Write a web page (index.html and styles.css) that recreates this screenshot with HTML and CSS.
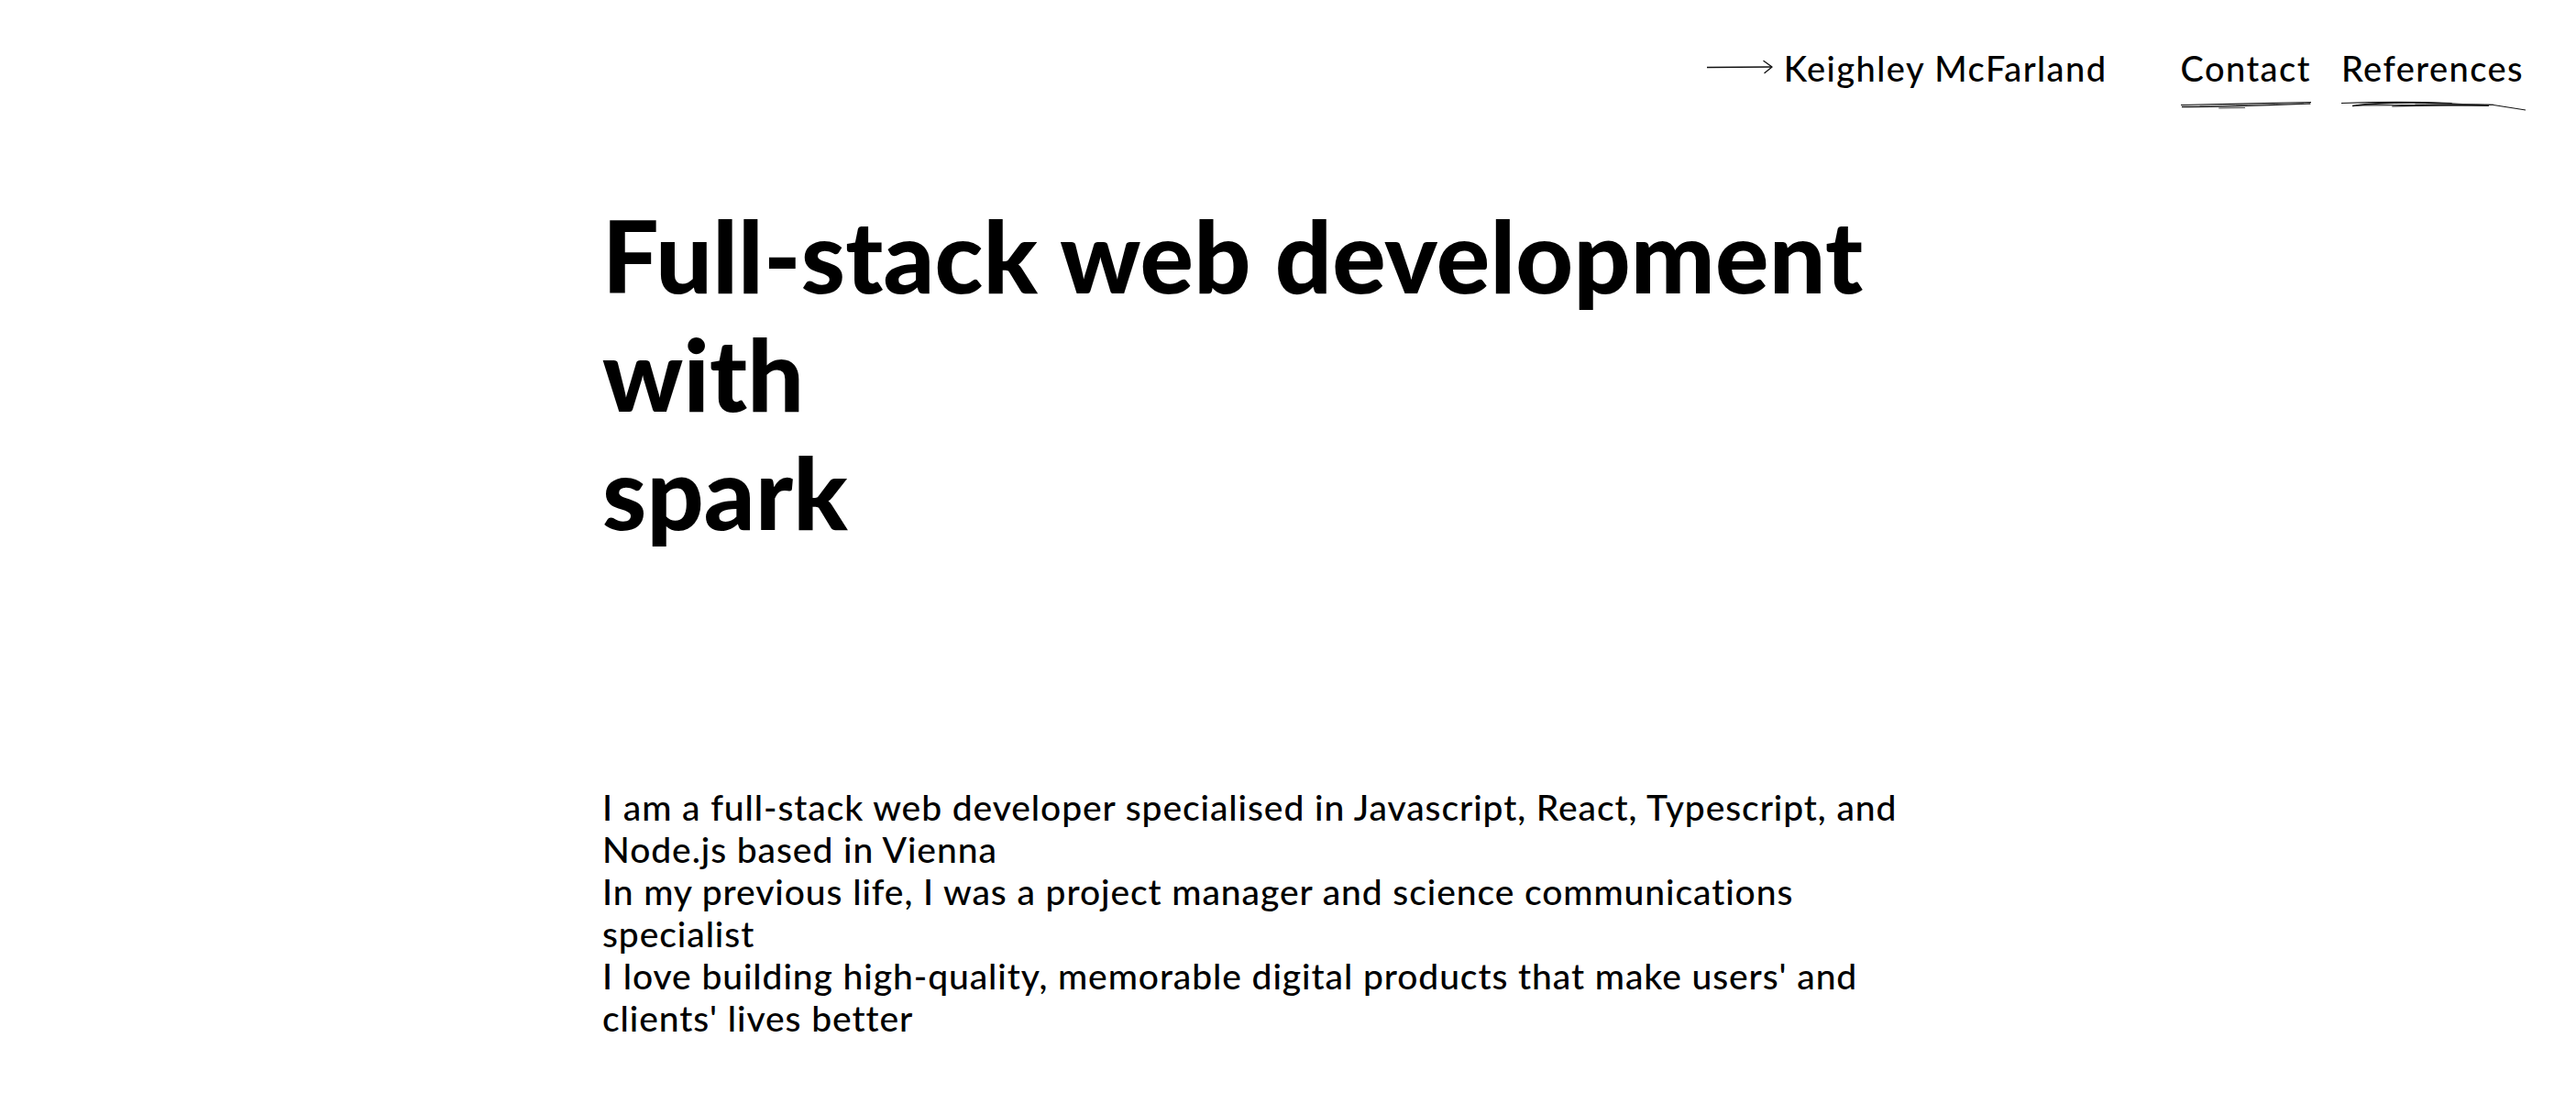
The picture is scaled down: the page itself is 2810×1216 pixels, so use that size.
FILE: index.html
```html
<!DOCTYPE html>
<html lang="en">
<head>
<meta charset="utf-8">
<title>Keighley McFarland</title>
<link rel="stylesheet" href="styles.css">
</head>
<body>
<header class="site-header">
  <a class="brand" href="#">
    <svg class="brand-arrow" width="72" height="16" viewBox="0 0 72 16" aria-hidden="true">
      <path d="M0 8.5 L70 8" fill="none" stroke="#111" stroke-width="1.4"/>
      <path d="M62 1.5 L71 8 L63 14.5" fill="none" stroke="#111" stroke-width="1.4" stroke-linecap="round" stroke-linejoin="round"/>
    </svg>
    <span class="brand-name">Keighley McFarland</span>
  </a>
  <nav class="nav">
    <a class="nav-link" href="#">Contact
      <svg class="scribble" width="138" height="10" viewBox="0 0 138 10" preserveAspectRatio="none" aria-hidden="true">
        <path d="M0 4.5 C40 3.5 95 2.5 138 1.5" fill="none" stroke="#111" stroke-width="1.1"/>
        <path d="M1 6.5 C45 6.8 100 4.5 137 3" fill="none" stroke="#111" stroke-width="1.3"/>
        <path d="M20 5.2 C50 5 90 4 130 2.5" fill="none" stroke="#555" stroke-width="0.8"/>
        <path d="M40 8 L68 7.5" fill="none" stroke="#333" stroke-width="0.9"/>
      </svg>
    </a>
    <a class="nav-link" href="#">References
      <svg class="scribble scribble-long" width="200" height="14" viewBox="0 0 200 14" preserveAspectRatio="none" aria-hidden="true">
        <path d="M0 3.5 C40 2 80 2 120 3.5" fill="none" stroke="#111" stroke-width="1.1"/>
        <path d="M12 6.5 C30 4 60 2.5 90 3 C110 3.5 140 5 160 6" fill="none" stroke="#111" stroke-width="1.6"/>
        <path d="M16 6 C60 5.5 100 5.5 160 6.5" fill="none" stroke="#222" stroke-width="1.2"/>
        <path d="M55 7 C90 6 130 5 165 5.5 L200 11" fill="none" stroke="#111" stroke-width="1.1"/>
        <path d="M80 4 C110 4.5 140 4.5 165 5" fill="none" stroke="#444" stroke-width="0.9"/>
      </svg>
    </a>
  </nav>
</header>

<main class="hero">
  <h1 class="hero-title">Full-stack web development with<br>spark</h1>
  <div class="hero-text">
    <p>I am a full-stack web developer specialised in Javascript, React, Typescript, and Node.js based in Vienna</p>
    <p>In my previous life, I was a project manager and science communications specialist</p>
    <p>I love building high-quality, memorable digital products that make users' and clients' lives better</p>
  </div>
</main>
</body>
</html>
```
FILE: styles.css
```css
html, body {
  margin: 0;
  padding: 0;
  background: #ffffff;
  color: #000000;
}

body {
  font-family: "Lato", "Liberation Sans", sans-serif;
}

a {
  color: inherit;
  text-decoration: none;
}

.site-header {
  display: flex;
  justify-content: flex-end;
  align-items: flex-start;
  padding: 52px 57px 0 0;
  font-size: 38px;
  font-weight: 500;
  letter-spacing: 1.45px;
  line-height: 1.2;
}

.brand {
  display: flex;
  align-items: center;
  gap: 12px;
}

.brand-arrow {
  display: block;
  margin-top: -4px;
}

.nav {
  display: flex;
  gap: 33px;
  margin-left: 80px;
}

.nav-link {
  position: relative;
  display: block;
}

.scribble {
  position: absolute;
  left: 0;
  top: 58px;
  width: 100%;
}

.scribble-long {
  top: 57px;
  width: calc(100% + 2px);
}

.hero {
  width: 1420px;
  margin-left: 657px;
  padding-top: 115px;
}

.hero-title {
  margin: 0;
  font-size: 109px;
  font-weight: 900;
  line-height: 129px;
  letter-spacing: 0.2px;
}

.hero-text {
  margin-top: 257px;
  font-size: 39px;
  font-weight: 500;
  letter-spacing: 0.91px;
  line-height: 46px;
}

.hero-text p {
  margin: 0;
}
```
